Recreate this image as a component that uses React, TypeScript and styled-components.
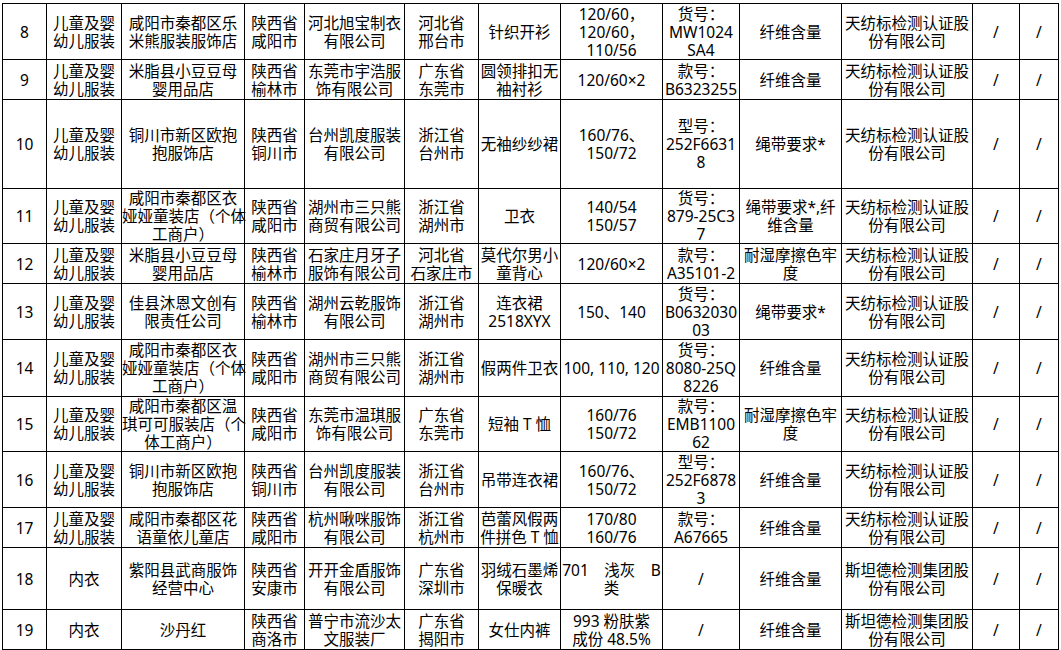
import React, { FC } from "react";
import styled, { createGlobalStyle } from "styled-components";

const GlobalStyle = createGlobalStyle`
  html, body {
    margin: 0;
    padding: 0;
    background: #fff;
  }
`;

const Page = styled.div`
  padding: 3px 0 0 2px;
  background: #fff;
`;

const Sheet = styled.table`
  border-collapse: collapse;
  table-layout: fixed;
  width: 1056px;
  font-family: "Noto Sans", "Noto Sans CJK SC", sans-serif;
  font-size: 15.5px;
  line-height: 18px;
  color: #000;
`;

const Col = styled.col<{ $w: number }>`
  width: ${(p) => p.$w}px;
`;

const Row = styled.tr<{ $h: number }>`
  height: ${(p) => p.$h}px;
`;

const Cell = styled.td`
  border: 1px solid #000;
  padding: 0;
  text-align: center;
  vertical-align: middle;
  white-space: pre;
  overflow: visible;
`;

const widths = [44, 75, 123, 60, 100, 74, 82, 102, 77, 102, 131, 47, 39];

const TFB = "天纺标检测认证股\n份有限公司";
const STD = "斯坦德检测集团股\n份有限公司";
const KID = "儿童及婴\n幼儿服装";

type Item = { h: number; cells: string[] };

const rows: Item[] = [
  {
    h: 56,
    cells: ["8", KID, "咸阳市秦都区乐\n米熊服装服饰店", "陕西省\n咸阳市", "河北旭宝制衣\n有限公司", "河北省\n邢台市", "针织开衫", "120/60，\n120/60，\n110/56", "货号：\nMW1024\nSA4", "纤维含量", TFB, "/", "/"],
  },
  {
    h: 40,
    cells: ["9", KID, "米脂县小豆豆母\n婴用品店", "陕西省\n榆林市", "东莞市宇浩服\n饰有限公司", "广东省\n东莞市", "圆领排扣无\n袖衬衫", "120/60×2", "款号：\nB6323255", "纤维含量", TFB, "/", "/"],
  },
  {
    h: 89,
    cells: ["10", KID, "铜川市新区欧抱\n抱服饰店", "陕西省\n铜川市", "台州凯度服装\n有限公司", "浙江省\n台州市", "无袖纱纱裙", "160/76、\n150/72", "型号：\n252F6631\n8", "绳带要求*", TFB, "/", "/"],
  },
  {
    h: 55,
    cells: ["11", KID, "咸阳市秦都区衣\n娅娅童装店（个体\n工商户）", "陕西省\n咸阳市", "湖州市三只熊\n商贸有限公司", "浙江省\n湖州市", "卫衣", "140/54\n150/57", "货号：\n879-25C3\n7", "绳带要求*,纤\n维含量", TFB, "/", "/"],
  },
  {
    h: 40,
    cells: ["12", KID, "米脂县小豆豆母\n婴用品店", "陕西省\n榆林市", "石家庄月牙子\n服饰有限公司", "河北省\n石家庄市", "莫代尔男小\n童背心", "120/60×2", "款号：\nA35101-2", "耐湿摩擦色牢\n度", TFB, "/", "/"],
  },
  {
    h: 56,
    cells: ["13", KID, "佳县沐恩文创有\n限责任公司", "陕西省\n榆林市", "湖州云乾服饰\n有限公司", "浙江省\n湖州市", "连衣裙\n2518XYX", "150、140", "货号：\nB0632030\n03", "绳带要求*", TFB, "/", "/"],
  },
  {
    h: 57,
    cells: ["14", KID, "咸阳市秦都区衣\n娅娅童装店（个体\n工商户）", "陕西省\n咸阳市", "湖州市三只熊\n商贸有限公司", "浙江省\n湖州市", "假两件卫衣", "100, 110, 120", "货号：\n8080-25Q\n8226", "纤维含量", TFB, "/", "/"],
  },
  {
    h: 55,
    cells: ["15", KID, "咸阳市秦都区温\n琪可可服装店（个\n体工商户）", "陕西省\n咸阳市", "东莞市温琪服\n饰有限公司", "广东省\n东莞市", "短袖 T 恤", "160/76\n150/72", "款号：\nEMB1100\n62", "耐湿摩擦色牢\n度", TFB, "/", "/"],
  },
  {
    h: 56,
    cells: ["16", KID, "铜川市新区欧抱\n抱服饰店", "陕西省\n铜川市", "台州凯度服装\n有限公司", "浙江省\n台州市", "吊带连衣裙", "160/76、\n150/72", "型号：\n252F6878\n3", "纤维含量", TFB, "/", "/"],
  },
  {
    h: 40,
    cells: ["17", KID, "咸阳市秦都区花\n语童依儿童店", "陕西省\n咸阳市", "杭州啾咪服饰\n有限公司", "浙江省\n杭州市", "芭蕾风假两\n件拼色 T 恤", "170/80\n160/76", "款号：\nA67665", "纤维含量", TFB, "/", "/"],
  },
  {
    h: 62,
    cells: ["18", "内衣", "紫阳县武商服饰\n经营中心", "陕西省\n安康市", "开开金盾服饰\n有限公司", "广东省\n深圳市", "羽绒石墨烯\n保暖衣", "701　浅灰　B\n类", "/", "纤维含量", STD, "/", "/"],
  },
  {
    h: 40,
    cells: ["19", "内衣", "沙丹红", "陕西省\n商洛市", "普宁市流沙太\n文服装厂", "广东省\n揭阳市", "女仕内裤", "993 粉肤紫\n成份 48.5%", "/", "纤维含量", STD, "/", "/"],
  },
];

export const App: FC = () => {
  return (
    <Page>
      <GlobalStyle />
      <Sheet>
        <colgroup>
          {widths.map((w, i) => (
            <Col key={i} $w={w} />
          ))}
        </colgroup>
        <tbody>
          {rows.map((r, i) => (
            <Row key={i} $h={r.h}>
              {r.cells.map((c, j) => (
                <Cell key={j}>{c}</Cell>
              ))}
            </Row>
          ))}
        </tbody>
      </Sheet>
    </Page>
  );
};

export default App;
